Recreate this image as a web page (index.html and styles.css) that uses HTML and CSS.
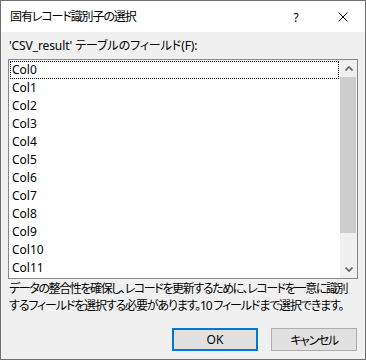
FILE: index.html
```html
<!DOCTYPE html>
<html lang="ja">
<head>
    <meta charset="UTF-8">
    <meta name="viewport" content="width=device-width, initial-scale=1.0">
    <title>固有レコード識別子の選択</title>
    <link rel="stylesheet" href="styles.css">
</head>
<body>
    <div class="dialog">
        <div class="title-bar">
            <span class="title">固有レコード識別子の選択</span>
            <span class="caption-button help">?</span>
            <span class="caption-button close">
                <svg width="10" height="10" viewBox="0 0 10 10">
                    <path d="M0.5 0.5 L9.5 9.5 M9.5 0.5 L0.5 9.5" stroke="#000" stroke-width="1" fill="none"/>
                </svg>
            </span>
        </div>

        <div class="content">
            <div class="field-label">'CSV_result' テーブルのフィールド(F):</div>

            <div class="list-box">
                <div class="list-items" id="listItems"></div>
                <div class="scrollbar">
                    <div class="scroll-arrow">
                        <svg width="8" height="5" viewBox="0 0 8 5">
                            <path d="M0.5 4.5 L4 1 L7.5 4.5" stroke="#606060" stroke-width="1.6" fill="none"/>
                        </svg>
                    </div>
                    <div class="scroll-track">
                        <div class="scroll-thumb"></div>
                    </div>
                    <div class="scroll-arrow">
                        <svg width="8" height="5" viewBox="0 0 8 5">
                            <path d="M0.5 0.5 L4 4 L7.5 0.5" stroke="#606060" stroke-width="1.6" fill="none"/>
                        </svg>
                    </div>
                </div>
            </div>

            <p class="description">
                <span class="desc-line first">データの整合性を確保し、レコードを更新するために、レコードを一意に識別</span>
                <span class="desc-line second">するフィールドを選択する必要があります。10 フィールドまで選択できます。</span>
            </p>

            <div class="buttons">
                <button class="dialog-button default">OK</button>
                <button class="dialog-button cancel">キャンセル</button>
            </div>
        </div>
    </div>

    <script>
        document.addEventListener('DOMContentLoaded', function() {
            const listItems = document.getElementById('listItems');
            for (let i = 0; i < 12; i++) {
                const item = document.createElement('div');
                item.classList.add('list-item');
                if (i === 0) {
                    item.classList.add('focused');
                }
                item.textContent = 'Col' + i;
                listItems.appendChild(item);
            }
        });
    </script>
</body>
</html>
```

FILE: styles.css
```css
* {
    box-sizing: border-box;
}
body {
    margin: 0;
    font-family: "Noto Sans", "Noto Sans CJK JP", sans-serif;
    font-size: 12px;
    font-feature-settings: "palt";
    color: #000;
    background-color: #f0f0f0;
}
.dialog {
    width: 366px;
    height: 360px;
    border: 1px solid #6f6f6f;
    background-color: #f0f0f0;
    display: flex;
    flex-direction: column;
}
.title-bar {
    height: 31px;
    background-color: #fff;
    display: flex;
    align-items: center;
    padding-left: 9px;
}
.title {
    flex: 1;
    line-height: 18px;
    letter-spacing: -1.1px;
}
.caption-button {
    width: 46px;
    height: 31px;
    display: flex;
    align-items: center;
    justify-content: center;
}
.help {
    font-size: 12px;
    padding-top: 1px;
}
.close {
    padding-left: 1px;
}
.content {
    flex: 1;
    padding: 0 7px;
    display: flex;
    flex-direction: column;
}
.field-label {
    padding-top: 5px;
    line-height: 18px;
    margin-bottom: 4px;
    padding-left: 1px;
    letter-spacing: -0.1px;
}
.list-box {
    height: 220px;
    border: 1px solid #828790;
    background-color: #fff;
    display: flex;
}
.list-items {
    flex: 1;
    padding: 1px;
}
.list-item {
    height: 18px;
    line-height: 16px;
    border: 1px solid transparent;
    padding-left: 1px;
}
.list-item.focused {
    border: 1px dotted #000;
}
.scrollbar {
    width: 17px;
    display: flex;
    flex-direction: column;
    background-color: #f0f0f0;
}
.scroll-arrow {
    height: 17px;
    display: flex;
    align-items: center;
    justify-content: center;
}
.scroll-track {
    flex: 1;
}
.scroll-thumb {
    height: 156px;
    margin-right: 1px;
    background-color: #cdcdcd;
}
.description {
    margin: 0;
    padding-top: 1px;
    padding-left: 1px;
    line-height: 17px;
    white-space: nowrap;
}
.desc-line {
    display: block;
}
.desc-line.first {
    letter-spacing: -1.39px;
}
.desc-line.second {
    letter-spacing: -1.15px;
}
.buttons {
    display: flex;
    justify-content: flex-end;
    gap: 13px;
    margin-top: 14px;
    margin-right: 1px;
}
.dialog-button {
    width: 86px;
    height: 23px;
    font-family: inherit;
    font-size: 12px;
    font-feature-settings: "palt";
    color: #000;
    background-color: #e1e1e1;
    border: 1px solid #adadad;
    padding: 0;
}
.dialog-button.cancel {
    letter-spacing: -1.4px;
}
.dialog-button.default {
    border: 2px solid #0078d7;
}
```
